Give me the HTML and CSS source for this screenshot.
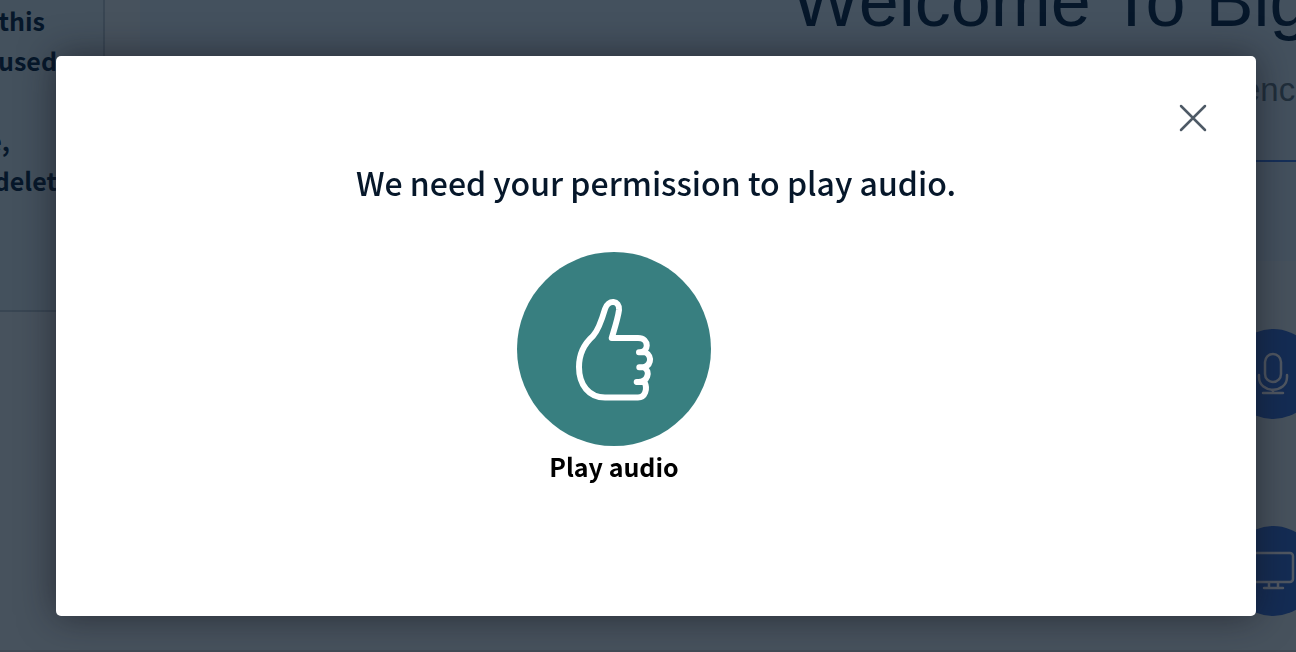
FILE: index.html
```html
<!DOCTYPE html>
<html lang="en">
<head>
<meta charset="utf-8">
<title>Play audio</title>
<link rel="stylesheet" href="styles.css">
</head>
<body>
<div class="room">
  <aside class="chat">
    <p class="line">this</p>
    <p class="line line-long">used</p>
    <p class="line"></p>
    <p class="line line-short">e,</p>
    <p class="line line-long">delet</p>
  </aside>
  <main class="stage">
    <section class="slide">
      <h1 class="slide-title">Welcome To BigBlueButton</h1>
      <p class="slide-text">encing</p>
      <hr class="slide-rule">
    </section>
    <nav class="features">
      <span class="feature">
        <svg viewBox="0 0 90 90" class="feature-icon"><rect x="37" y="25" width="16" height="28" rx="8"/><path d="M31 46V48C31 65 59 65 59 48V46M45 61V64M35 64H55"/></svg>
      </span>
      <span class="feature">
        <svg viewBox="0 0 90 90" class="feature-icon"><rect x="24" y="27" width="41" height="29" rx="3"/><path d="M41 57V61M50 57V61M36 62H55"/></svg>
      </span>
    </nav>
  </main>
</div>
<div class="dialog" role="dialog" aria-modal="true" aria-labelledby="dialog-title">
  <header class="dialog-header">
    <button class="close" type="button" aria-label="Close">
      <svg viewBox="0 0 30 30" class="close-icon"><path d="M3 3L27 27M27 3L3 27"/></svg>
    </button>
  </header>
  <h2 class="dialog-title" id="dialog-title">We need your permission to play audio.</h2>
  <div class="dialog-content">
    <button class="play" type="button">
      <span class="play-circle">
        <svg viewBox="0 0 194 194" class="thumb"><path d="M94.700 86C98 75 101 66 102 58C103 48 91 47 88 57C84.500 69 81.500 78 76 84C67 92 62 101 62 115C62 133 72 145.500 88 145.500H121C128 145.500 131 137 127.500 130H119.700C131 131 134 119 127 115.300H122.300C135 116 135.500 104 128.500 100.300H122C132 101 133 86 121 86Z"/></svg>
      </span>
      <span class="play-label">Play audio</span>
    </button>
  </div>
</div>
</body>
</html>
```
FILE: styles.css
```css
* { box-sizing: border-box; }

body {
  margin: 0;
  min-height: 100vh;
  background: #47525d;
  color: #06172a;
  font-family: "Noto Sans CJK SC", "Noto Sans", sans-serif;
  overflow: hidden;
}

p, h1, h2 { margin: 0; }

.room {
  display: flex;
  height: 100vh;
  border-bottom: 2px solid #414a55;
}

.chat {
  flex: none;
  width: 105px;
  height: 312px;
  border-right: 2px solid #394653;
  border-bottom: 2px solid #394653;
  background: #44515d;
}

.line {
  display: flex;
  justify-content: flex-end;
  width: 45px;
  height: 40px;
  font-size: 25px;
  font-weight: 700;
  line-height: 40px;
}

.line-long { width: 57px; }
.line-short { width: 10px; }

.stage {
  flex: 1;
  min-width: 0;
  margin-left: 35px;
}

.slide {
  height: 261px;
  background: #44515e;
  font-family: "Liberation Sans", Arial, sans-serif;
  white-space: nowrap;
  overflow: hidden;
}

.slide-title {
  margin: -40px 0 0 652px;
  font-size: 72px;
  font-weight: 400;
  line-height: 82px;
}

.slide-text {
  margin: 29px 0 0 1102px;
  color: #202e3b;
  font-size: 33px;
  line-height: 38px;
}

.slide-rule {
  height: 2px;
  margin: 51px 0 0 653px;
  border: 0;
  background: #152f59;
}

.features {
  display: flex;
  flex-direction: column;
  align-items: flex-end;
  gap: 107px;
  margin-right: -22px;
  padding-top: 68px;
}

.feature {
  width: 90px;
  height: 90px;
  border-radius: 50%;
  background: #142c54;
}

.feature-icon {
  display: block;
  fill: none;
  stroke: #505762;
  stroke-width: 2.5;
  stroke-linecap: round;
}

.dialog {
  position: fixed;
  inset: 56px 40px 36px 56px;
  padding: 45px 46px;
  border-radius: 5px;
  background: #fff;
  box-shadow: 0 0 36px rgba(20, 20, 28, .6);
}

.dialog-header {
  display: flex;
  justify-content: flex-end;
}

.close {
  padding: 2px;
  border: 0;
  background: none;
}

.close-icon {
  display: block;
  width: 30px;
  height: 30px;
  fill: none;
  stroke: #4e5a66;
  stroke-width: 2.5;
  stroke-linecap: round;
}

.dialog-title {
  margin-top: 20px;
  font-size: 32px;
  font-weight: 500;
  line-height: 54px;
  text-align: center;
}

.dialog-content {
  display: flex;
  justify-content: center;
  margin-top: 43px;
  padding-right: 84px;
}

.play {
  display: flex;
  flex-direction: column;
  align-items: center;
  padding: 0;
  border: 0;
  background: none;
  color: #000;
  font: inherit;
}

.play-circle {
  width: 194px;
  height: 194px;
  border-radius: 50%;
  background: #387f80;
}

.thumb {
  display: block;
  fill: none;
  stroke: #fff;
  stroke-width: 6;
  stroke-linecap: round;
  stroke-linejoin: round;
}

.play-label {
  font-size: 25px;
  font-weight: 700;
  line-height: 40px;
}
```
